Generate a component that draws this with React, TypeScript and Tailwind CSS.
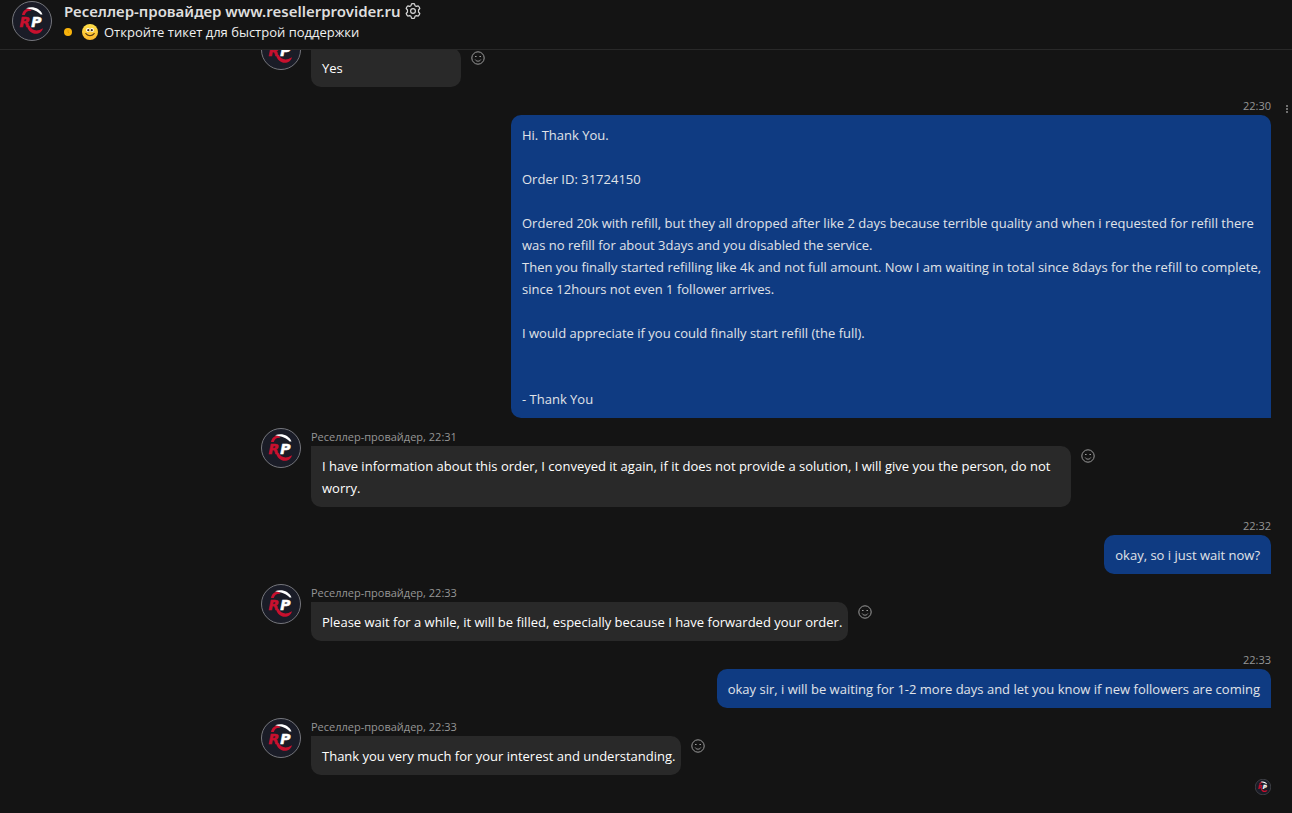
import { type ReactNode } from "react";
import clsx from "clsx";

type Message = {
  id: number;
  own?: boolean;
  time: string;
  text: string;
};

const SENDER = "Реселлер-провайдер";

const messages: Message[] = [
  { id: 1, time: "22:30", text: "Yes" },
  {
    id: 2,
    own: true,
    time: "22:30",
    text: `Hi. Thank You.

Order ID: 31724150

Ordered 20k with refill, but they all dropped after like 2 days because terrible quality and when i requested for refill there was no refill for about 3days and you disabled the service.
Then you finally started refilling like 4k and not full amount. Now I am waiting in total since 8days for the refill to complete, since 12hours not even 1 follower arrives.

I would appreciate if you could finally start refill (the full).


- Thank You`,
  },
  {
    id: 3,
    time: "22:31",
    text: "I have information about this order, I conveyed it again, if it does not provide a solution, I will give you the person, do not worry.",
  },
  { id: 4, own: true, time: "22:32", text: "okay, so i just wait now?" },
  {
    id: 5,
    time: "22:33",
    text: "Please wait for a while, it will be filled, especially because I have forwarded your order.",
  },
  {
    id: 6,
    own: true,
    time: "22:33",
    text: "okay sir, i will be waiting for 1-2 more days and let you know if new followers are coming",
  },
  {
    id: 7,
    time: "22:33",
    text: "Thank you very much for your interest and understanding.",
  },
];

function Logo({ className }: { className: string }) {
  return (
    <svg viewBox="0 0 40 40" className={className} aria-hidden="true">
      <circle cx="20" cy="20" r="19.5" fill="#1a1c27" stroke="#75767c" />
      {/* upper swoosh */}
      <path d="M10 14C10.8 9.8 14 7.4 17.5 7.6L19.5 9.8C16 9.4 13.6 11 12.8 14Z" fill="#c8102e" />
      <path d="M14 7.2C20.5 4.6 28 7 30.5 13.4L28.6 13.4C25.6 10.2 21 8.2 14 7.2Z" fill="#fff" />
      <text
        x="7.5"
        y="25.5"
        fontFamily="DejaVu Sans, sans-serif"
        fontSize="14"
        fontWeight="700"
        fontStyle="italic"
        strokeWidth=".5"
        fill="#c8102e"
        stroke="#c8102e"
      >
        R
        <tspan dx="1" fill="#fff" stroke="#fff">
          P
        </tspan>
      </text>
      {/* lower swoosh */}
      <path d="M15 25L17.5 25C19.4 28.6 23 30.2 27.4 29L31 27.2C29.8 32 25 33.8 20.8 32.2C17.6 31 15.8 28.4 15 25Z" fill="#c8102e" />
    </svg>
  );
}

function SmileIcon() {
  return (
    <svg viewBox="0 0 14 14" className="size-[14px]" fill="none" stroke="#9a9a9a" aria-hidden="true">
      <circle cx="7" cy="7" r="6.2" />
      <path d="M4.2 8.6C5.4 10.7 8.6 10.7 9.8 8.6" />
      <path d="M4 5.5H5.6M8.4 5.5H10" />
    </svg>
  );
}

function GearIcon() {
  return (
    <svg viewBox="0 0 16 16" className="size-4" fill="none" stroke="#d6d6d6" strokeLinejoin="round" aria-hidden="true">
      <path
        d="M6.5 .9Q8 .4 9.5 .9L10 2.7L11.3 3.4L13.2 2.9Q14.4 4 14.8 5.5L13.5 7V9L14.8 10.5Q14.4 12 13.2 13.1L11.3 12.6L10 13.3L9.5 15.1Q8 15.6 6.5 15.1L6 13.3L4.7 12.6L2.8 13.1Q1.6 12 1.2 10.5L2.5 9V7L1.2 5.5Q1.6 4 2.8 2.9L4.7 3.4L6 2.7Z"
        strokeWidth="1.2"
      />
      <circle cx="8" cy="8" r="2.4" strokeWidth="1.2" />
    </svg>
  );
}

function SmileyFace() {
  return (
    <svg viewBox="0 0 16 16" className="size-4 shrink-0" aria-hidden="true">
      <defs>
        <linearGradient id="face" x1="0" y1="0" x2="0" y2="1">
          <stop offset="0" stopColor="#ffe04a" />
          <stop offset="1" stopColor="#fcb72b" />
        </linearGradient>
      </defs>
      <circle cx="8" cy="8" r="8" fill="url(#face)" />
      <ellipse cx="6" cy="6" rx="1.9" ry="2" fill="#fff" />
      <ellipse cx="10" cy="6" rx="1.9" ry="2" fill="#fff" />
      <circle cx="6.3" cy="6.2" r="1.1" fill="#3a2a18" />
      <circle cx="9.8" cy="6.2" r="1.1" fill="#3a2a18" />
      <path d="M3.8 9.6C5.4 12.4 10.6 12.4 12.2 9.6" fill="none" stroke="#4a2d12" strokeWidth="1.1" strokeLinecap="round" />
    </svg>
  );
}

function AwayDot() {
  return (
    <svg viewBox="0 0 8 8" className="size-2 shrink-0" aria-hidden="true">
      <circle cx="4" cy="4" r="4" fill="#f8b30c" />
      <path d="M4 2.2V4.2L5.2 5" fill="none" stroke="#d69200" strokeWidth=".7" />
    </svg>
  );
}

function Label({ children }: { children: ReactNode }) {
  return <div className="h-[18px] text-[11px] leading-[18px] whitespace-nowrap text-[#969696]">{children}</div>;
}

function Incoming({ message }: { message: Message }) {
  return (
    <li className="flex items-start gap-[10px]">
      <Logo className="size-10 shrink-0" />
      <div className="max-w-[760px] min-w-[150px]">
        <Label>
          {SENDER}, {message.time}
        </Label>
        <p className="rounded-[10px] rounded-tl-none bg-[#292929] pt-[9px] pr-[6px] pb-2 pl-[11px] text-white">
          {message.text}
        </p>
      </div>
      <button type="button" aria-label="React" className="mt-[21px] shrink-0">
        <SmileIcon />
      </button>
    </li>
  );
}

function Outgoing({ message, menu }: { message: Message; menu: boolean }) {
  const multiline = message.text.includes("\n");

  return (
    <li className="relative flex flex-col items-end">
      <Label>{message.time}</Label>
      <p
        className={clsx(
          "max-w-[760px] rounded-[10px] rounded-br-none bg-[#0f3b82] pt-[9px] pb-2 pl-[11px] whitespace-pre-wrap text-[#e0e3e8]",
          multiline ? "pr-[6px]" : "pr-[11px]",
        )}
      >
        {message.text}
      </p>
      {menu && (
        <button
          type="button"
          aria-label="Message options"
          className="absolute top-2 -right-[17px] flex flex-col gap-px"
        >
          <span className="size-[2px] bg-[#707070]" />
          <span className="size-[2px] bg-[#707070]" />
          <span className="size-[2px] bg-[#707070]" />
        </button>
      )}
    </li>
  );
}

export default function App() {
  return (
    <div className="flex h-screen flex-col bg-[#141414] font-['Open_Sans','Noto_Sans',sans-serif]">
      <header className="flex h-[50px] shrink-0 items-start gap-3 border-b border-[#292929] px-3 pt-px">
        <Logo className="size-10 shrink-0" />
        <div>
          <div className="flex items-center gap-1">
            <h1 className="font-['Noto_Sans',sans-serif] text-[15px] leading-5 font-semibold text-[#dedede]">
              Реселлер-провайдер www.resellerprovider.ru
            </h1>
            <button type="button" aria-label="Settings">
              <GearIcon />
            </button>
          </div>
          <div className="flex items-center gap-[6px] text-[13px] leading-[22px] text-[#f0f0f0]">
            <AwayDot />
            <span className="flex items-center gap-[6px] pl-1">
              <SmileyFace />
              Откройте тикет для быстрой поддержки
            </span>
          </div>
        </div>
      </header>

      {/* reversed column keeps the newest message in view */}
      <main className="flex min-h-0 flex-1 flex-col-reverse overflow-y-auto [scrollbar-width:none]">
        <div className="mr-[21px] ml-auto w-full max-w-[1010px] pb-[18px]">
          <ul className="flex flex-col gap-[10px] text-[13px] leading-[22px]">
            {messages.map((message) =>
              message.own ? (
                <Outgoing key={message.id} message={message} menu={message.id === 2} />
              ) : (
                <Incoming key={message.id} message={message} />
              ),
            )}
          </ul>
          <div className="mt-1 flex justify-end">
            <Logo className="size-4" />
          </div>
        </div>
      </main>
    </div>
  );
}
